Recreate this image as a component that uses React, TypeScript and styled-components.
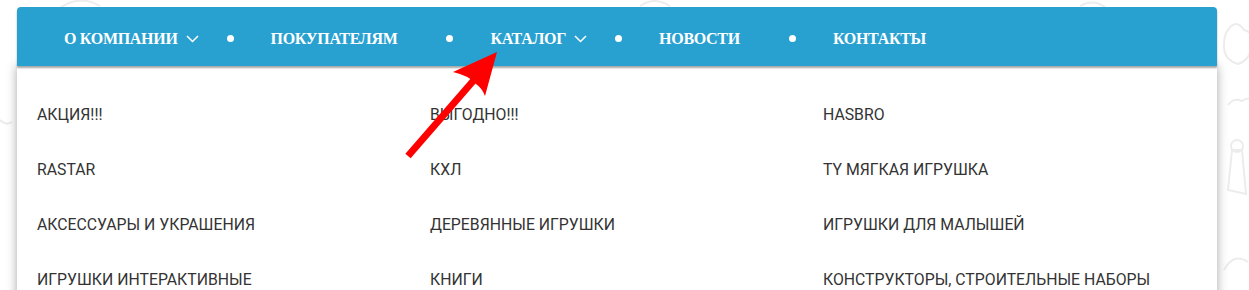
import React from "react";
import styled, { createGlobalStyle } from "styled-components";

const GlobalStyle = createGlobalStyle`
  html, body {
    margin: 0;
    padding: 0;
    background: #fff;
  }
  body {
    font-family: "Roboto", "Liberation Sans", sans-serif;
    overflow: hidden;
  }
`;

interface NavItem {
  title: string,
  dropdown?: boolean,
}

const navItems: NavItem[] = [
  { title: "О КОМПАНИИ", dropdown: true },
  { title: "ПОКУПАТЕЛЯМ" },
  { title: "КАТАЛОГ", dropdown: true },
  { title: "НОВОСТИ" },
  { title: "КОНТАКТЫ" },
];

const catalog: string[][] = [
  ["АКЦИЯ!!!", "ВЫГОДНО!!!", "HASBRO"],
  ["RASTAR", "КХЛ", "TY МЯГКАЯ ИГРУШКА"],
  ["АКСЕССУАРЫ И УКРАШЕНИЯ", "ДЕРЕВЯННЫЕ ИГРУШКИ", "ИГРУШКИ ДЛЯ МАЛЫШЕЙ"],
  ["ИГРУШКИ ИНТЕРАКТИВНЫЕ", "КНИГИ", "КОНСТРУКТОРЫ, СТРОИТЕЛЬНЫЕ НАБОРЫ"],
];

const Chevron = ({ hidden }: { hidden?: boolean }) => (
  <ChevronSlot>
    {!hidden && (
      <svg width="13" height="8" viewBox="0 0 13 8">
        <path d="M1 1 L6.5 6.5 L12 1" fill="none" stroke="#fff" strokeWidth="1.5" />
      </svg>
    )}
  </ChevronSlot>
);

const Arrow = () => (
  <ArrowLayer width="100" height="110" viewBox="400 50 100 110">
    <line x1="408" y1="156" x2="474" y2="80" stroke="#ff0000" strokeWidth="7" strokeLinecap="butt" />
    <path d="M497 52 L453 72 Q470 76 476 84 Q482 88 485 96 Z" fill="#ff0000" />
  </ArrowLayer>
);

const Doodles = () => (
  <DoodleLayer width="1249" height="290" viewBox="0 0 1249 290">
    <g fill="none" stroke="#ececec" strokeWidth="2">
      <path d="M1228 30 q8 -12 16 0 q10 2 8 16 q-2 14 -14 18 q-14 -4 -14 -18 q0 -12 4 -16 z" />
      <path d="M1228 105 q6 -8 14 -4 q8 -6 14 2" />
      <path d="M1232 150 l-4 40 l18 4 l-4 -44 z" />
      <circle cx="1237" cy="146" r="6" />
      <path d="M1224 270 q10 -18 24 -8" />
      <path d="M0 120 q6 6 12 2" />
      <path d="M60 8 q20 -14 40 -2" />
      <path d="M640 6 q14 -10 30 0" />
      <path d="M1080 6 q14 -8 26 2" />
    </g>
  </DoodleLayer>
);

export default function App() {
  return (
    <Page>
      <GlobalStyle />
      <Doodles />
      <Menu>
        <NavBar>
          {navItems.map((item, i) => (
            <NavEntry key={item.title}>
              <NavLink>
                {item.title}
                <Chevron hidden={!item.dropdown} />
              </NavLink>
              {i < navItems.length - 1 && <Dot />}
            </NavEntry>
          ))}
        </NavBar>
        <Dropdown>
          {catalog.flat().map((name) => (
            <CatalogLink key={name}>{name}</CatalogLink>
          ))}
        </Dropdown>
      </Menu>
      <Arrow />
    </Page>
  );
}

const Page = styled.div`
  position: relative;
  width: 1249px;
  height: 290px;
  padding: 7px 0 0 17px;
  box-sizing: border-box;
  overflow: hidden;
`;

const DoodleLayer = styled.svg`
  position: absolute;
  left: 0;
  top: 0;
  pointer-events: none;
`;

const ArrowLayer = styled.svg`
  position: absolute;
  left: 400px;
  top: 50px;
  z-index: 5;
  pointer-events: none;
`;

const Menu = styled.div`
  position: relative;
  width: 1200px;
`;

const NavBar = styled.nav`
  position: relative;
  z-index: 2;
  display: flex;
  align-items: center;
  height: 59px;
  padding: 4px 0 0 47px;
  box-sizing: border-box;
  background: #29a1d0;
  border-radius: 4px 4px 0 0;
  box-shadow: 0 2px 2px rgba(0, 0, 0, 0.35);
`;

const NavEntry = styled.div`
  display: flex;
  align-items: center;
`;

const NavLink = styled.a`
  display: flex;
  align-items: center;
  color: #fff;
  font-family: "Liberation Serif", "DejaVu Serif", serif;
  font-weight: bold;
  font-size: 16px;
  letter-spacing: -0.3px;
  white-space: nowrap;
`;

const ChevronSlot = styled.span`
  display: inline-flex;
  align-items: center;
  width: 13px;
  height: 10px;
  margin-left: 8px;
`;

const Dot = styled.span`
  width: 7px;
  height: 7px;
  border-radius: 50%;
  background: #fff;
  margin: 0 37px 0 28px;
`;

const Dropdown = styled.div`
  display: grid;
  grid-template-columns: repeat(3, 393px);
  grid-auto-rows: 55px;
  padding: 21px 20px 0;
  background: #fff;
  height: 260px;
  box-shadow: 0 0 10px rgba(0, 0, 0, 0.35);
`;

const CatalogLink = styled.a`
  display: flex;
  align-items: center;
  color: #333;
  font-family: "Roboto", "Liberation Sans", sans-serif;
  font-size: 15.8px;
  white-space: nowrap;
`;
